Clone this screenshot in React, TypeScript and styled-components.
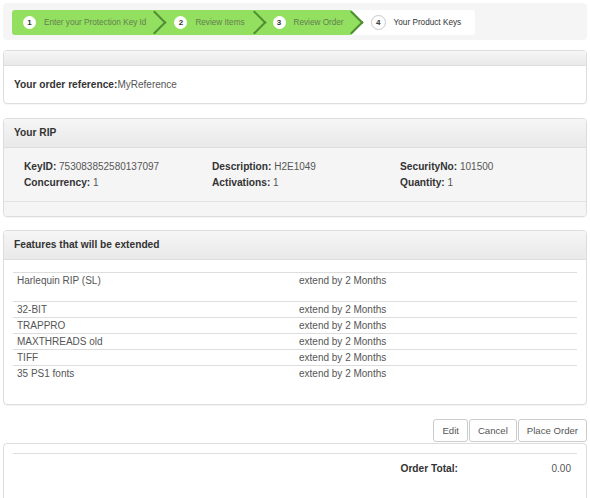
import styled, { createGlobalStyle } from 'styled-components';

const GlobalStyle = createGlobalStyle`
  html, body {
    margin: 0;
    padding: 0;
    background: #fff;
  }
  body {
    font-family: "Liberation Sans", Arial, Helvetica, sans-serif;
    font-size: 10px;
    color: #555;
  }
`;

const Page = styled.div`
  padding: 3px;
`;

/* ---------- checkout wizard ---------- */

const Wizard = styled.nav`
  background: #f5f5f5;
  border-radius: 4px;
  padding: 7px 9px 5px;
`;

const Steps = styled.ol`
  display: flex;
  margin: 0;
  padding: 0;
  list-style: none;
  height: 25px;
`;

const Step = styled.li<{ $done?: boolean; $first?: boolean; $padLeft: number; $padRight: number }>`
  position: relative;
  display: flex;
  align-items: center;
  gap: 8px;
  padding: 0 ${({ $padRight }) => $padRight}px 0 ${({ $padLeft }) => $padLeft}px;
  font-size: 8.2px;
  white-space: nowrap;
  background: ${({ $done }) => ($done ? '#93df5f' : '#fff')};
  color: ${({ $done }) => ($done ? '#62804f' : '#333')};
  border-radius: ${({ $first, $done }) => ($first ? '3px 0 0 3px' : $done ? '0' : '0 3px 3px 0')};

  ${({ $done }) =>
    $done &&
    `
    &::after {
      content: '';
      position: absolute;
      z-index: 1;
      top: 3.5px;
      right: -9px;
      width: 17px;
      height: 17px;
      background: #93df5f;
      border-top: 2px solid #4f8e32;
      border-right: 2px solid #4f8e32;
      box-sizing: border-box;
      transform: rotate(45deg);
    }
  `}
`;

/* label and number sit above the arrow tip that reaches back over the step */
const StepText = styled.span`
  position: relative;
  z-index: 2;
`;

const StepNumber = styled.span<{ $current?: boolean }>`
  position: relative;
  z-index: 2;
  display: inline-flex;
  align-items: center;
  justify-content: center;
  box-sizing: border-box;
  width: ${({ $current }) => ($current ? 15 : 13)}px;
  height: ${({ $current }) => ($current ? 15 : 13)}px;
  border-radius: 50%;
  background: #fff;
  border: ${({ $current }) => ($current ? '1px solid #c8c8c8' : 'none')};
  color: #333;
  font-weight: bold;
  font-size: 8px;
`;

/* ---------- panels ---------- */

const Panel = styled.section<{ $gap: number }>`
  margin-top: ${({ $gap }) => $gap}px;
  border: 1px solid #ddd;
  border-radius: 4px;
  background: #fff;
  box-shadow: 0 1px 1px rgba(0, 0, 0, 0.04);
  overflow: hidden;
`;

const PanelHeading = styled.header`
  padding: 6px 10px;
  background: linear-gradient(#f6f6f6, #e9e9e9);
  border-bottom: 1px solid #dedede;
  font-weight: bold;
  font-size: 10.2px;
  line-height: 16px;
  color: #333;

  &:empty {
    padding: 7px 10px;
    height: 0;
  }
`;

const PanelBody = styled.div`
  padding: 12px 10px;
  line-height: 13px;
`;

const Label = styled.span`
  font-weight: bold;
  font-size: 10.2px;
  color: #333;
`;

const InfoGrid = styled.div`
  display: grid;
  grid-template-columns: repeat(3, 1fr);
  padding: 11px 9px 10px;
  background: #f5f5f5;
  line-height: 16px;
`;

const InfoCell = styled.div`
  padding-left: 11px;
  white-space: nowrap;
`;

const PanelFooter = styled.footer`
  height: 14px;
  background: #f5f5f5;
  border-top: 1px solid #e3e3e3;
`;

const FeatureBody = styled.div`
  padding: 12px 9px 23px;
`;

const FeatureTable = styled.table`
  width: 100%;
  border-collapse: collapse;
  table-layout: fixed;
  line-height: 15px;

  td {
    padding: 0 4px;
    border-top: 1px solid #ddd;
    vertical-align: top;
  }
`;

const FeatureRow = styled.tr<{ $tall?: boolean }>`
  td {
    padding-bottom: ${({ $tall }) => ($tall ? 13 : 0)}px;
  }
`;

/* ---------- actions and totals ---------- */

const Actions = styled.div`
  display: flex;
  justify-content: flex-end;
  gap: 1px;
  margin-top: 14px;
`;

const Button = styled.button`
  height: 23px;
  padding: 0 8px;
  border: 1px solid #ccc;
  border-radius: 3px;
  background: #fff;
  color: #555;
  font-family: inherit;
  font-size: 9.6px;
  cursor: pointer;
`;

const TotalsBody = styled.div`
  padding: 9px 9px 30px;
`;

const TotalRow = styled.div`
  display: grid;
  grid-template-columns: 1fr auto 112px;
  border-top: 1px solid #ddd;
  padding: 7px 0;
  line-height: 15px;
`;

const TotalLabel = styled.span`
  grid-column: 2;
  padding-right: 7px;
  font-weight: bold;
  font-size: 10.2px;
  color: #333;
`;

const TotalValue = styled.span`
  text-align: right;
  padding-right: 6px;
`;

const steps = [
  { label: 'Enter your Protection Key Id', padLeft: 11, padRight: 8 },
  { label: 'Review Items', padLeft: 20, padRight: 9 },
  { label: 'Review Order', padLeft: 19, padRight: 7 },
  { label: 'Your Product Keys', padLeft: 20, padRight: 14 },
];

const currentStep = 3;

const rip = [
  ['KeyID:', '753083852580137097'],
  ['Description:', 'H2E1049'],
  ['SecurityNo:', '101500'],
  ['Concurrency:', '1'],
  ['Activations:', '1'],
  ['Quantity:', '1'],
];

const features = [
  { name: 'Harlequin RIP (SL)', extension: 'extend by 2 Months', tall: true },
  { name: '32-BIT', extension: 'extend by 2 Months' },
  { name: 'TRAPPRO', extension: 'extend by 2 Months' },
  { name: 'MAXTHREADS old', extension: 'extend by 2 Months' },
  { name: 'TIFF', extension: 'extend by 2 Months' },
  { name: '35 PS1 fonts', extension: 'extend by 2 Months' },
];

export default function App() {
  return (
    <>
      <GlobalStyle />
      <Page>
        <Wizard>
          <Steps>
            {steps.map((step, i) => (
              <Step
                key={step.label}
                $done={i < currentStep}
                $first={i === 0}
                $padLeft={step.padLeft}
                $padRight={step.padRight}
              >
                <StepNumber $current={i === currentStep}>{i + 1}</StepNumber>
                <StepText>{step.label}</StepText>
              </Step>
            ))}
          </Steps>
        </Wizard>

        <Panel $gap={10}>
          <PanelHeading />
          <PanelBody>
            <Label>Your order reference:</Label>MyReference
          </PanelBody>
        </Panel>

        <Panel $gap={14}>
          <PanelHeading>Your RIP</PanelHeading>
          <InfoGrid>
            {rip.map(([label, value]) => (
              <InfoCell key={label}>
                <Label>{label}</Label> {value}
              </InfoCell>
            ))}
          </InfoGrid>
          <PanelFooter />
        </Panel>

        <Panel $gap={13}>
          <PanelHeading>Features that will be extended</PanelHeading>
          <FeatureBody>
            <FeatureTable>
              <tbody>
                {features.map((f) => (
                  <FeatureRow key={f.name} $tall={f.tall}>
                    <td>{f.name}</td>
                    <td>{f.extension}</td>
                  </FeatureRow>
                ))}
              </tbody>
            </FeatureTable>
          </FeatureBody>
        </Panel>

        <Actions>
          <Button>Edit</Button>
          <Button>Cancel</Button>
          <Button>Place Order</Button>
        </Actions>

        <Panel $gap={1}>
          <TotalsBody>
            <TotalRow>
              <TotalLabel>Order Total:</TotalLabel>
              <TotalValue>0.00</TotalValue>
            </TotalRow>
          </TotalsBody>
        </Panel>
      </Page>
    </>
  );
}
